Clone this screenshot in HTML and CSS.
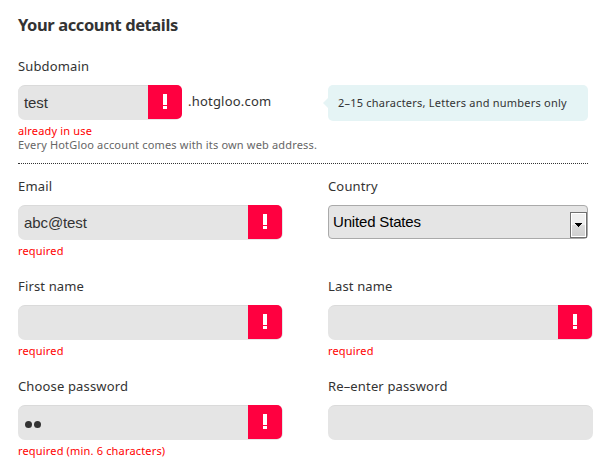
FILE: index.html
```html
<!DOCTYPE html>
<html lang="en">
<head>
<meta charset="utf-8">
<title>Your account details</title>
<link rel="stylesheet" href="styles.css">
</head>
<body>
<form class="account">
  <h1>Your account details</h1>
  <section class="subdomain">
    <div class="label">Subdomain</div>
    <div class="row">
      <div class="input short"><span class="value">test</span><span class="alert"><i></i></span></div>
      <span class="domain">.hotgloo.com</span>
      <div class="hint">2–15 characters, Letters and numbers only</div>
    </div>
    <div class="error">already in use</div>
    <div class="note">Every HotGloo account comes with its own web address.</div>
  </section>
  <div class="fields">
    <div class="field">
      <div class="label">Email</div>
      <div class="input"><span class="value">abc@test</span><span class="alert"><i></i></span></div>
      <div class="error">required</div>
    </div>
    <div class="field">
      <div class="label">Country</div>
      <div class="select"><span>United States</span><b class="arrow"><svg width="7" height="4" viewBox="0 0 7 4" shape-rendering="crispEdges"><path d="M0 0h7v1H6v1H5v1H4v1H3V3H2V2H1V1H0z"/></svg></b></div>
    </div>
    <div class="field">
      <div class="label">First name</div>
      <div class="input"><span class="value"></span><span class="alert"><i></i></span></div>
      <div class="error">required</div>
    </div>
    <div class="field">
      <div class="label">Last name</div>
      <div class="input"><span class="value"></span><span class="alert"><i></i></span></div>
      <div class="error">required</div>
    </div>
    <div class="field">
      <div class="label">Choose password</div>
      <div class="input"><span class="value dots"><i></i><i></i></span><span class="alert"><i></i></span></div>
      <div class="error">required (min. 6 characters)</div>
    </div>
    <div class="field">
      <div class="label">Re–enter password</div>
      <div class="input"></div>
    </div>
  </div>
</form>
</body>
</html>
```
FILE: styles.css
```css
* { box-sizing: border-box; }
body { margin: 0; background: #fff; color: #333; font-family: "Noto Sans", sans-serif; overflow: hidden; }
.account { padding: 15px 17px 0 18px; height: 473px; white-space: nowrap; }
h1 { margin: 0; height: 41px; font-size: 16.5px; line-height: 20px; font-weight: 700; letter-spacing: -0.4px; }
.label { height: 29px; line-height: 20px; font-size: 13px; letter-spacing: 0.15px; }
.subdomain { width: 570px; height: 108px; border-bottom: 1px dotted #333; }
.row { display: flex; height: 36px; }
.input { display: flex; width: 265px; height: 35px; background: #e5e5e5; border-radius: 7px; border-top: 1px solid #dadada; }
.short { width: 164px; }
.value { flex: 1; padding-left: 6px; font: 15px/34px "Liberation Sans", sans-serif; letter-spacing: -0.1px; }
.alert { width: 34px; height: 34px; margin: -1px 1px 0 0; background: #ff0040; border-radius: 0 5px 5px 0; padding: 9px 0 0 15px; }
.short .alert { margin-right: 0; }
.alert i { display: block; width: 4px; height: 15px; background: linear-gradient(#fff 0 11px, #ff0040 11px 12px, #fff 12px); }
.domain { width: 140px; padding-left: 6px; font-size: 13px; line-height: 32px; letter-spacing: 0.2px; }
.hint { position: relative; width: 260px; height: 36px; margin-left: 6px; padding-left: 10px; background: #e5f4f5; border-radius: 5px; font-size: 11px; line-height: 36px; letter-spacing: 0.22px; }
.hint::before { content: ""; position: absolute; left: -5px; top: 13px; border: 5px solid transparent; border-left: 0; border-right-color: #e5f4f5; }
.error, .note { height: 14px; line-height: 16px; font-size: 11px; letter-spacing: 0.17px; padding-top: 2px; }
.error { color: #f00; }
.field .error { padding-top: 3px; }
.note { color: #666; }
.fields { display: grid; grid-template-columns: 310px 265px; grid-auto-rows: 100px; padding-top: 12px; }
.select { position: relative; width: 260px; height: 34px; background: #e5e5e5; border: 1px solid #aaa; border-radius: 4px; padding-left: 4px; color: #000; font: 15px/32px "Liberation Sans", sans-serif; letter-spacing: -0.17px; }
.arrow { position: absolute; right: 0; top: 6px; width: 17px; height: 26px; border: 1px solid #707070; box-shadow: inset 0 0 0 1px #fff; background: linear-gradient(#f0f0f0 50%, #dcdcdc 50%, #cfcfcf); display: flex; align-items: center; justify-content: center; }
.dots { display: flex; align-items: center; gap: 2px; padding: 2px 0 0 7px; }
.dots i { width: 7px; height: 7px; border-radius: 50%; background: #333; }
```
